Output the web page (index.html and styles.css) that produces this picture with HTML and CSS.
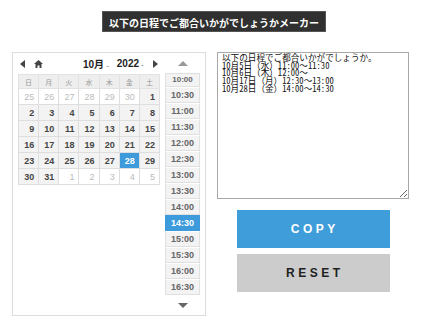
FILE: index.html
```html
<!DOCTYPE html>
<html lang="ja">
<head>
  <meta charset="UTF-8">
  <title>日程調整メーカー</title>
  <link rel="stylesheet" href="styles.css">
</head>
<body>
  <!-- Title -->
  <div class="title-wrap">
    <h1 class="title">以下の日程でご都合いかがでしょうかメーカー</h1>
  </div>

  <div class="main">
    <!-- Date / time picker -->
    <div class="picker">
      <div class="cal">
        <div class="cal-nav">
          <span class="nav-btn">
            <svg width="6" height="8" viewBox="0 0 6 8"><path d="M5 0 L0 4 L5 8 Z" fill="#444"/></svg>
          </span>
          <span class="nav-btn home">
            <svg width="9" height="8" viewBox="0 0 9 8"><path d="M4.5 0 L9 4 L7.5 4 L7.5 8 L5.5 8 L5.5 5.5 L3.5 5.5 L3.5 8 L1.5 8 L1.5 4 L0 4 Z" fill="#444"/></svg>
          </span>
          <span class="month">10月<span class="dash">-</span></span>
          <span class="year">2022<span class="dash">-</span></span>
          <span class="nav-btn next">
            <svg width="6" height="8" viewBox="0 0 6 8"><path d="M1 0 L6 4 L1 8 Z" fill="#444"/></svg>
          </span>
        </div>
        <table class="days" id="days">
          <thead>
            <tr><th>日</th><th>月</th><th>火</th><th>水</th><th>木</th><th>金</th><th>土</th></tr>
          </thead>
          <tbody></tbody>
        </table>
      </div>

      <div class="times">
        <div class="arrow">
          <svg width="10" height="5" viewBox="0 0 10 5"><path d="M0 5 L5 0 L10 5 Z" fill="#999"/></svg>
        </div>
        <ul class="time-list" id="time-list"></ul>
        <div class="arrow down">
          <svg width="10" height="5" viewBox="0 0 10 5"><path d="M0 0 L5 5 L10 0 Z" fill="#666"/></svg>
        </div>
      </div>
    </div>

    <!-- Output -->
    <div class="side">
      <textarea class="output">以下の日程でご都合いかがでしょうか。
10月5日（水）11:00～11:30
10月6日（木）12:00～
10月17日（月）12:30～13:00
10月28日（金）14:00～14:30</textarea>
      <button class="btn copy">COPY</button>
      <button class="btn reset">RESET</button>
    </div>
  </div>

  <script>
    // Calendar days for October 2022
    const tbody = document.querySelector("#days tbody");
    const cells = [];
    [25, 26, 27, 28, 29, 30].forEach(d => cells.push({ d: d, other: true }));
    for (let d = 1; d <= 31; d++) cells.push({ d: d, other: false });
    [1, 2, 3, 4, 5].forEach(d => cells.push({ d: d, other: true }));

    for (let r = 0; r < 6; r++) {
      const tr = document.createElement("tr");
      for (let c = 0; c < 7; c++) {
        const cell = cells[r * 7 + c];
        const td = document.createElement("td");
        td.textContent = cell.d;
        if (cell.other) td.classList.add("other");
        if (!cell.other && cell.d === 28) td.classList.add("active");
        tr.appendChild(td);
      }
      tbody.appendChild(tr);
    }

    // Time slots
    const list = document.getElementById("time-list");
    for (let h = 10; h <= 16; h++) {
      ["00", "30"].forEach(m => {
        const li = document.createElement("li");
        li.textContent = `${h}:${m}`;
        if (h === 14 && m === "30") li.classList.add("active");
        list.appendChild(li);
      });
    }
  </script>
</body>
</html>
```

FILE: styles.css
```css
* {
  margin: 0;
  padding: 0;
  box-sizing: border-box;
}

body {
  background: #fff;
  font-family: "Liberation Sans", Arial, "Noto Sans CJK JP", sans-serif;
  color: #333;
}

.title-wrap {
  display: flex;
  justify-content: center;
  padding: 11px 0 0 4px;
}

.title {
  background: #2f302f;
  color: #fff;
  font-family: "Noto Sans CJK JP", sans-serif;
  font-size: 10px;
  font-weight: bold;
  line-height: 21px;
  height: 21px;
  padding: 0 6px;
  border: 1px solid #555;
}

.main {
  display: flex;
  align-items: flex-start;
  gap: 11px;
  padding: 20px 0 0 12px;
}

/* Picker panel */
.picker {
  display: flex;
  gap: 5px;
  width: 194px;
  height: 264px;
  padding: 0 5px 0 5px;
  border: 1px solid #ddd;
  box-shadow: 0 1px 1px rgba(0, 0, 0, 0.08);
}

.cal {
  width: 142px;
}

.cal-nav {
  display: flex;
  align-items: center;
  height: 21px;
  font-size: 10px;
  font-weight: bold;
  color: #222;
}

.nav-btn {
  display: flex;
  align-items: center;
  margin-left: 2px;
}

.nav-btn.home {
  margin-left: 8px;
}

.month {
  margin-left: 40px;
}

.year {
  margin-left: 8px;
}

.dash {
  font-weight: normal;
  color: #666;
  margin-left: 2px;
  font-size: 8px;
}

.nav-btn.next {
  margin-left: 8px;
}

.days {
  width: 142px;
  border-collapse: collapse;
  table-layout: fixed;
}

.days th {
  height: 14px;
  background: #eee;
  color: #999;
  font-family: "Noto Sans CJK JP", sans-serif;
  font-size: 7px;
  font-weight: normal;
  border: 1px solid #e2e2e2;
}

.days td {
  height: 16px;
  background: #f3f3f3;
  border: 1px solid #dedede;
  text-align: right;
  padding-right: 4px;
  font-size: 9px;
  font-weight: bold;
  color: #444;
}

.days td.other {
  background: #fff;
  color: #bbb;
  font-weight: normal;
}

.days td.active {
  background: #3d9bdb;
  color: #fff;
}

/* Time column */
.times {
  width: 36px;
  display: flex;
  flex-direction: column;
}

.arrow {
  display: flex;
  justify-content: center;
  align-items: center;
  height: 21px;
}

.arrow.down {
  height: 20px;
}

.time-list {
  list-style: none;
}

.time-list li {
  height: 16px;
  line-height: 14px;
  text-align: center;
  font-size: 9px;
  font-weight: bold;
  color: #666;
  background: #f3f3f3;
  border: 1px solid #e0e0e0;
  border-top-color: #fff;
}

.time-list li:first-child {
  height: 14px;
  line-height: 12px;
  font-size: 8px;
  border-top-color: #e0e0e0;
}

.time-list li.active {
  background: #3d9bdb;
  color: #fff;
  border-color: #3d9bdb;
}

/* Right column */
.side {
  width: 192px;
  display: flex;
  flex-direction: column;
  align-items: center;
}

.output {
  width: 192px;
  height: 147px;
  border: 1px solid #a8a8a8;
  padding: 1px 4px;
  font-family: "Noto Sans Mono CJK JP", "Noto Sans CJK JP", monospace;
  font-size: 8.6px;
  line-height: 7.7px;
  color: #111;
  resize: both;
  outline: none;
}

.btn {
  width: 153px;
  height: 38px;
  border: none;
  font-family: "Liberation Sans", Arial, sans-serif;
  font-size: 12px;
  font-weight: bold;
  letter-spacing: 3.5px;
  text-indent: 3.5px;
  cursor: pointer;
}

.copy {
  margin-top: 11px;
  background: #3f9dd9;
  color: #fff;
}

.reset {
  margin-top: 6px;
  background: #ccc;
  color: #222;
}
```
